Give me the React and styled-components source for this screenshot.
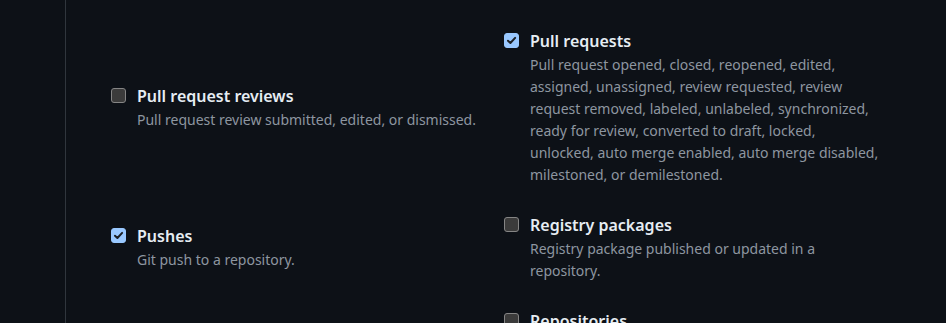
import styled, { createGlobalStyle } from "styled-components";

const GlobalStyle = createGlobalStyle`
  html, body {
    margin: 0;
    padding: 0;
    background: #0d1117;
    overflow: hidden;
  }
`;

const Page = styled.div`
  display: flex;
  min-height: 323px;
  height: 323px;
  background: #0d1117;
  font-family: "Noto Sans", "Open Sans", sans-serif;
`;

const Sidebar = styled.div`
  width: 65px;
  flex-shrink: 0;
  border-right: 1px solid #30363d;
`;

const Main = styled.div`
  flex: 1;
  padding: 28px 0 0 45px;
  overflow: hidden;
`;

const EventGrid = styled.ul`
  list-style: none;
  margin: 0;
  padding: 0;
  width: 786px;
  display: grid;
  grid-template-columns: 1fr 1fr;
  row-gap: 26px;
  align-items: center;
`;

const EventItem = styled.li`
  display: flex;
  align-items: flex-start;
  gap: 11px;
  padding-right: 16px;
`;

const Box = styled.span`
  flex-shrink: 0;
  box-sizing: border-box;
  width: 15px;
  height: 15px;
  margin-top: 5px;
  border-radius: 3px;
  display: flex;
  align-items: center;
  justify-content: center;
  background: ${(p) => (p.checked ? "#99c8ff" : "#3b3b3b")};
  border: 1px solid ${(p) => (p.checked ? "#99c8ff" : "#858585")};
`;

const Text = styled.div`
  display: flex;
  flex-direction: column;
`;

const Title = styled.span`
  font-size: 16px;
  font-weight: 600;
  line-height: 26px;
  color: #e6edf3;
`;

const Description = styled.span`
  font-size: 14px;
  line-height: 22px;
  color: #8d96a0;
`;

const events = [
  { title: "Pull request reviews", desc: "Pull request review submitted, edited, or dismissed.", checked: false },
  {
    title: "Pull requests",
    desc: "Pull request opened, closed, reopened, edited, assigned, unassigned, review requested, review request removed, labeled, unlabeled, synchronized, ready for review, converted to draft, locked, unlocked, auto merge enabled, auto merge disabled, milestoned, or demilestoned.",
    checked: true,
  },
  { title: "Pushes", desc: "Git push to a repository.", checked: true },
  { title: "Registry packages", desc: "Registry package published or updated in a repository.", checked: false },
  { title: "Releases", desc: "Release created, edited, published, unpublished, or deleted.", checked: false },
  {
    title: "Repositories",
    desc: "Repository created, deleted, archived, unarchived, publicized, privatized, edited, renamed, or transferred.",
    checked: false,
  },
];

function Checkbox({ checked }) {
  return (
    <Box checked={checked}>
      {checked && (
        <svg width="11" height="11" viewBox="0 0 10 10">
          <path d="M1.8 5.2 L4 7.3 L8.3 2.6" fill="none" stroke="#1b1f24" strokeWidth="1.8" strokeLinecap="round" strokeLinejoin="round" />
        </svg>
      )}
    </Box>
  );
}

export default function App() {
  return (
    <>
      <GlobalStyle />
      <Page>
        <Sidebar />
        <Main>
          <EventGrid>
            {events.map((e) => (
              <EventItem key={e.title}>
                <Checkbox checked={e.checked} />
                <Text>
                  <Title>{e.title}</Title>
                  <Description>{e.desc}</Description>
                </Text>
              </EventItem>
            ))}
          </EventGrid>
        </Main>
      </Page>
    </>
  );
}
